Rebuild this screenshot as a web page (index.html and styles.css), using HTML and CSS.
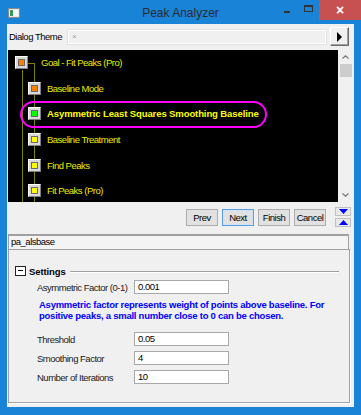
FILE: index.html
```html
<!DOCTYPE html>
<html>
<head>
<meta charset="utf-8">
<link rel="stylesheet" href="styles.css">
</head>
<body>
<div class="window">
  <div class="titlebar">
    <div class="tb-left">
      <svg class="appicon" width="12" height="10" viewBox="0 0 12 10">
        <rect x="0.5" y="0.5" width="11" height="9" fill="#e8e8e8" stroke="#8a8a8a"/>
        <rect x="2" y="2" width="3" height="6" fill="#3a9a5a"/>
        <rect x="5" y="2" width="5" height="6" fill="#f8f8f8"/>
      </svg>
    </div>
    <div class="title">Peak Analyzer</div>
    <div class="caption">
      <span class="cap-min"></span>
      <span class="cap-max"></span>
      <span class="cap-close">×</span>
    </div>
  </div>
  <div class="client">
    <div class="theme-row">
      <span class="theme-lbl">Dialog Theme</span>
      <div class="combo"><span class="combo-x">×</span></div>
      <div class="arrowbtn">
        <svg width="6" height="10" viewBox="0 0 6 10"><path d="M0 0 L5 5 L0 10 Z" fill="#000"/></svg>
      </div>
    </div>
    <div class="tree-wrap">
      <div class="tree">
        <span class="line line-root"></span>
        <span class="line line-h"></span>
        <span class="line line-child"></span>
        <div class="node root"><span class="sq"><i class="orange"></i></span><span class="txt">Goal - Fit Peaks (Pro)</span></div>
        <div class="node child"><span class="sq"><i class="orange"></i></span><span class="txt">Baseline Mode</span></div>
        <div class="node child sel"><span class="sq"><i class="green"></i></span><span class="txt">Asymmetric Least Squares Smoothing Baseline</span></div>
        <div class="node child"><span class="sq"><i class="yellow"></i></span><span class="txt">Baseline Treatment</span></div>
        <div class="node child"><span class="sq"><i class="yellow"></i></span><span class="txt">Find Peaks</span></div>
        <div class="node child"><span class="sq"><i class="yellow"></i></span><span class="txt">Fit Peaks (Pro)</span></div>
      </div>
      <div class="vscroll">
        <div class="sb-btn">
          <svg width="7" height="4" viewBox="0 0 7 4"><path d="M0.5 3.5 L3.5 0.8 L6.5 3.5" fill="none" stroke="#777" stroke-width="1.2"/></svg>
        </div>
        <div class="sb-thumb"></div>
        <div class="sb-track"></div>
        <div class="sb-btn">
          <svg width="7" height="4" viewBox="0 0 7 4"><path d="M0.5 0.5 L3.5 3.2 L6.5 0.5" fill="none" stroke="#777" stroke-width="1.2"/></svg>
        </div>
      </div>
    </div>
    <div class="btn-row">
      <button class="btn">Prev</button>
      <button class="btn default">Next</button>
      <button class="btn">Finish</button>
      <button class="btn">Cancel</button>
      <div class="mini-col">
        <div class="mini"><svg width="9" height="5" viewBox="0 0 9 5"><path d="M0 0 H9 L4.5 5 Z" fill="#0000ff"/></svg></div>
        <div class="mini"><svg width="9" height="5" viewBox="0 0 9 5"><path d="M0 5 H9 L4.5 0 Z" fill="#0000ff"/></svg></div>
      </div>
    </div>
    <div class="pathbox">pa_alsbase</div>
    <div class="panel">
      <div class="group-head">
        <span class="collapse"></span>
        <span class="group-title">Settings</span>
        <span class="group-line"></span>
      </div>
      <div class="field first">
        <span class="flabel">Asymmetric Factor (0-1)</span>
        <div class="finput">0.001</div>
      </div>
      <p class="note">Asymmetric factor represents weight of points above baseline. For<br>positive peaks, a small number close to 0 can be chosen.</p>
      <div class="field">
        <span class="flabel">Threshold</span>
        <div class="finput">0.05</div>
      </div>
      <div class="field">
        <span class="flabel">Smoothing Factor</span>
        <div class="finput">4</div>
      </div>
      <div class="field">
        <span class="flabel">Number of Iterations</span>
        <div class="finput">10</div>
      </div>
    </div>
  </div>
</div>
</body>
</html>
```

FILE: styles.css
```css
html, body {
  margin: 0;
  padding: 0;
  background: #1883d7;
}

.window {
  width: 361px;
  height: 415px;
  background: #1883d7;
  display: flex;
  flex-direction: column;
  font-family: "Liberation Sans", Arial, sans-serif;
  font-size: 9.5px;
  letter-spacing: -0.5px;
  color: #000;
  overflow: hidden;
}

/* ---------- title bar ---------- */
.titlebar {
  height: 24px;
  flex: none;
  display: grid;
  grid-template-columns: 1fr auto 1fr;
  align-items: start;
}

.tb-left {
  display: flex;
}

.appicon {
  margin: 8px 0 0 8px;
}

.title {
  font-size: 12px;
  letter-spacing: 0;
  line-height: 14px;
  padding-top: 6px;
  color: #2a2a2a;
}

.caption {
  display: flex;
  justify-content: flex-end;
  align-items: flex-start;
}

.cap-min {
  width: 6px;
  height: 2px;
  background: #333;
  margin-top: 11px;
  margin-right: 14px;
}

.cap-max {
  box-sizing: border-box;
  width: 9px;
  height: 7px;
  border: 1px solid #333;
  border-top-width: 2px;
  margin-top: 5px;
  margin-right: 6px;
}

.cap-close {
  width: 42px;
  height: 20px;
  background: #c75050;
  color: #fff;
  display: flex;
  align-items: center;
  justify-content: center;
  font-size: 14px;
  letter-spacing: 0;
  font-weight: bold;
}

/* ---------- client ---------- */
.client {
  margin: 0 7px 8px 7px;
  height: 383px;
  box-sizing: border-box;
  background: #f0f0f0;
  display: flex;
  flex-direction: column;
  padding-top: 3px;
}

.theme-row {
  display: flex;
  align-items: center;
  height: 19px;
  padding-left: 2px;
}

.theme-lbl {
  width: 58px;
  white-space: nowrap;
}

.combo {
  box-sizing: border-box;
  width: 260px;
  height: 16px;
  background: #f0f0f0;
  border: 1px solid #e2e2e2;
  box-shadow: inset 0 0 0 1px #fff;
  display: flex;
  align-items: center;
  padding-left: 4px;
}

.combo-x {
  font-size: 8px;
  color: #9a9a9a;
}

.arrowbtn {
  box-sizing: border-box;
  width: 19px;
  height: 19px;
  margin-left: 3px;
  background: #f0f0f0;
  border: 1px solid;
  border-color: #fff #6d6d6d #6d6d6d #fff;
  box-shadow: inset -1px -1px 0 #a0a0a0;
  display: flex;
  align-items: center;
  justify-content: center;
}

/* ---------- tree ---------- */
.tree-wrap {
  margin: 4px 0 0 1px;
  width: 345px;
  height: 152px;
  display: flex;
}

.tree {
  flex: 1;
  background: #000;
  position: relative;
  overflow: hidden;
}

.line {
  position: absolute;
  background: #808000;
}

.line-root {
  left: 14px;
  top: 20px;
  bottom: 0;
  width: 1px;
}

.line-h {
  left: 19px;
  top: 13px;
  width: 8px;
  height: 1px;
}

.line-child {
  left: 26px;
  top: 13px;
  bottom: 0;
  width: 1px;
}

.node {
  position: relative;
  height: 25.6px;
  display: flex;
  align-items: center;
  color: #ecec00;
  white-space: nowrap;
}

.node.root {
  padding-left: 7px;
}

.node.root .txt {
  margin-left: 13px;
}

.node.child {
  padding-left: 20px;
}

.node.child .txt {
  margin-left: 6px;
}

.node.sel {
  color: #ffff00;
  font-weight: bold;
  letter-spacing: -0.1px;
}

.node.sel::before {
  content: "";
  position: absolute;
  left: 12px;
  top: -0.5px;
  width: 247px;
  height: 27px;
  box-sizing: border-box;
  border: 2px solid #ff00ff;
  border-radius: 14px;
}

.sq {
  position: relative;
  box-sizing: border-box;
  width: 13px;
  height: 13px;
  padding: 2px;
  background: #d8d8d8;
  border: 1px solid;
  border-color: #fff #808080 #808080 #fff;
  flex: none;
}

.sq i {
  display: block;
  width: 100%;
  height: 100%;
  box-sizing: border-box;
  border: 1px solid #6a6a6a;
}

.sq i.orange { background: #ff8000; }
.sq i.green { background: #00ff00; }
.sq i.yellow { background: #ffff00; }

.vscroll {
  width: 15px;
  background: #f0f0f0;
  display: flex;
  flex-direction: column;
}

.sb-btn {
  height: 14px;
  display: flex;
  align-items: center;
  justify-content: center;
}

.sb-thumb {
  height: 13px;
  margin: 0 1px 0 2px;
  background: #cdcdcd;
}

.sb-track {
  flex: 1;
}

/* ---------- buttons ---------- */
.btn-row {
  margin-top: 5px;
  height: 20px;
  display: flex;
  align-items: center;
  justify-content: flex-end;
  padding-right: 3px;
  gap: 4px;
}

.btn {
  box-sizing: border-box;
  width: 32px;
  height: 17px;
  padding: 0;
  background: #e1e1e1;
  border: 1px solid #adadad;
  font-family: inherit;
  font-size: inherit;
  letter-spacing: inherit;
  color: #000;
}

.btn.default {
  border-color: #5a9de0;
  box-shadow: inset 0 0 0 1px #cfe3f7;
}

.mini-col {
  margin-left: 5px;
  display: flex;
  flex-direction: column;
  justify-content: space-between;
  height: 20px;
}

.mini {
  box-sizing: border-box;
  width: 16px;
  height: 9px;
  background: #e8e8e8;
  border: 1px solid #c0c0c0;
  display: flex;
  align-items: center;
  justify-content: center;
}

/* ---------- path box ---------- */
.pathbox {
  box-sizing: border-box;
  margin: 7px 5px 0 1px;
  height: 15px;
  padding-left: 2px;
  background: #f4f4f4;
  border-top: 2px solid #a0a0a0;
  border-left: 1px solid #a0a0a0;
  border-right: 1px solid #a0a0a0;
  line-height: 12px;
  color: #000;
}

/* ---------- settings panel ---------- */
.panel {
  box-sizing: border-box;
  margin: 0 4px 0 1px;
  height: 154px;
  border: 1px solid #a0a0a0;
  box-shadow: 1px 1px 0 #fff;
  padding: 15px 0 0 6px;
}

.group-head {
  display: flex;
  align-items: center;
  height: 12px;
}

.collapse {
  position: relative;
  box-sizing: border-box;
  width: 11px;
  height: 10px;
  border: 1px solid #222;
  background: #fff;
  flex: none;
}

.collapse::after {
  content: "";
  position: absolute;
  left: 2px;
  right: 2px;
  top: 3px;
  height: 1px;
  background: #000;
}

.group-title {
  margin-left: 3px;
  font-weight: bold;
  letter-spacing: -0.1px;
}

.group-line {
  flex: 1;
  margin: 0 10px 0 4px;
  height: 1px;
  background: #a0a0a0;
  box-shadow: 0 1px 0 #fff;
}

.field {
  display: flex;
  align-items: center;
  height: 14px;
  margin-top: 5px;
  padding-left: 22px;
}

.field.first {
  margin-top: 3px;
}

.flabel {
  width: 97px;
  color: #1a1a1a;
  white-space: nowrap;
}

.finput {
  box-sizing: border-box;
  width: 95px;
  height: 14px;
  background: #fff;
  border: 1px solid #a9a9a9;
  padding-left: 3px;
  line-height: 12px;
}

.note {
  margin: 5px 0 11px 24px;
  color: #0000ff;
  font-weight: bold;
  letter-spacing: -0.25px;
  line-height: 11px;
  white-space: nowrap;
}
```
